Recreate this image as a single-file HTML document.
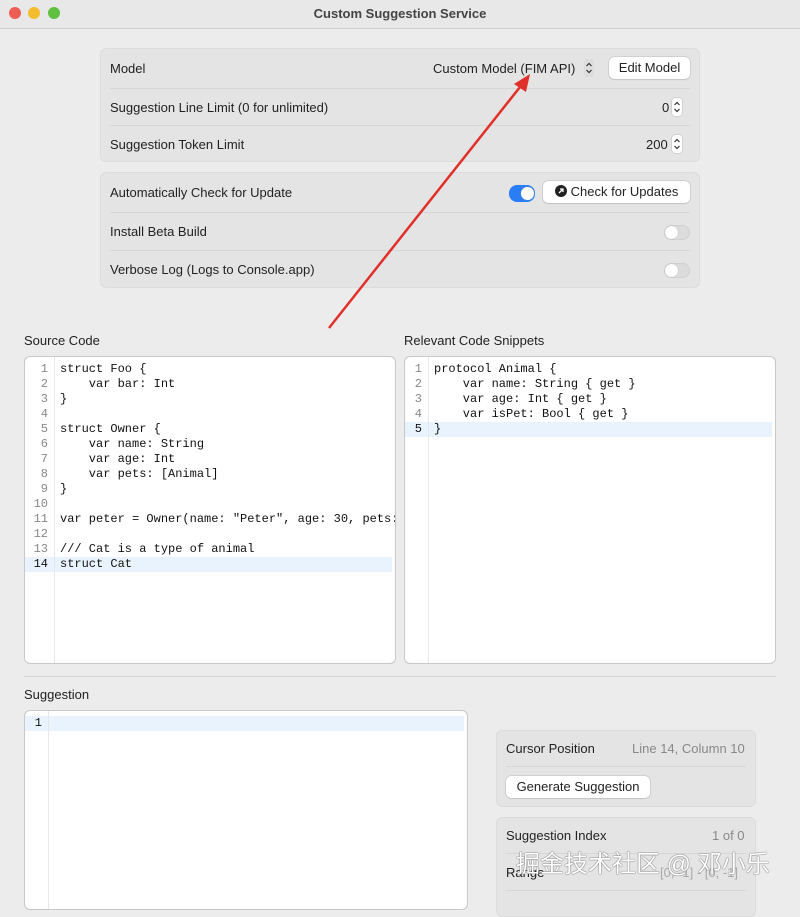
<!DOCTYPE html><html><head><style>
*{box-sizing:border-box;margin:0;padding:0}
body{width:800px;height:900px;overflow:hidden;background:#ececec;font-family:"Liberation Sans",sans-serif;font-size:13px;color:#222;position:relative}
.title{position:absolute;top:0;left:0;width:800px;height:29px;background:#e8e8e8;border-bottom:1px solid #d0d0d0;text-align:center;font-weight:bold;line-height:28px;color:#444}
.dot{position:absolute;top:7px;width:12px;height:12px;border-radius:50%}
.a{position:absolute}
.grp{position:absolute;background:#e4e4e4;border:1px solid #dcdcdc;border-radius:6px}
.sep{position:absolute;height:1px;background:#d6d6d6}
.btn{position:absolute;background:#fff;border-radius:5px;box-shadow:0 0 0 .5px #bbb,0 1px 1px #ccc;text-align:center;font-size:13px;line-height:22px}
.tog{position:absolute;width:26px;height:15px;border-radius:8px;background:#dcdcdc;border:1px solid #d0d0d0}
.tog i{position:absolute;top:0;left:0;width:13px;height:13px;border-radius:50%;background:#fff;box-shadow:0 0 1px #999}
.ed{position:absolute;background:#fff;border:1px solid #c8c8c8;border-radius:6px;overflow:hidden;font-family:"Liberation Mono",monospace;font-size:12px;line-height:15px}
.gut{position:absolute;top:0;left:0;bottom:0;width:30px;border-right:1px solid #e6e6e6;color:#888;text-align:right;padding:5px 6px 0 0}
.code{position:absolute;top:5px;left:35px;white-space:pre;color:#111}
.hl{position:absolute;left:0;right:3px;height:15px;background:#e9f3fd}
.stp{position:absolute;width:10px;height:18px;border-radius:3px;background:#fff;box-shadow:0 0 0 .5px #bbb}
.stp svg{position:absolute;left:1px;top:2px}
</style></head><body>
<div class="title">Custom Suggestion Service</div>
<div class="dot" style="left:9px;background:#ee5e56"></div><div class="dot" style="left:28px;background:#f4bd2f"></div><div class="dot" style="left:48px;background:#5fc13f"></div>

<div class="grp" style="left:100px;top:48px;width:600px;height:114px"></div>
<div class="a" style="left:110px;top:61px">Model</div>
<div class="a" style="left:433px;top:61px">Custom Model (FIM API)</div>
<div class="stp" style="left:584px;top:59px;background:#ddd;box-shadow:none"><svg width="8" height="14"><path d="M1.5 5L4 2.5 6.5 5M1.5 9L4 11.5 6.5 9" stroke="#333" fill="none" stroke-width="1.2"/></svg></div>
<div class="btn" style="left:609px;top:57px;width:81px">Edit Model</div>
<div class="sep" style="left:110px;top:88px;width:580px"></div>
<div class="a" style="left:110px;top:100px">Suggestion Line Limit (0 for unlimited)</div>
<div class="a" style="left:662px;top:100px">0</div>
<div class="stp" style="left:672px;top:98px"><svg width="8" height="14"><path d="M1.5 5L4 2.5 6.5 5M1.5 9L4 11.5 6.5 9" stroke="#333" fill="none" stroke-width="1.2"/></svg></div>
<div class="sep" style="left:110px;top:125px;width:580px"></div>
<div class="a" style="left:110px;top:137px">Suggestion Token Limit</div>
<div class="a" style="left:646px;top:137px">200</div>
<div class="stp" style="left:672px;top:135px"><svg width="8" height="14"><path d="M1.5 5L4 2.5 6.5 5M1.5 9L4 11.5 6.5 9" stroke="#333" fill="none" stroke-width="1.2"/></svg></div>

<div class="grp" style="left:100px;top:172px;width:600px;height:116px"></div>
<div class="a" style="left:110px;top:185px">Automatically Check for Update</div>
<div class="tog" style="left:509px;top:185px;height:17px;background:#2a7ef5;border-color:#2a7ef5"><i style="left:11px;top:1px"></i></div>
<div class="btn" style="left:543px;top:181px;width:147px"><svg width="12" height="12" style="vertical-align:-1px;margin-right:4px"><circle cx="6" cy="6" r="6" fill="#222"/><path d="M4 8L8 4M5 4h3v3" stroke="#fff" stroke-width="1.3" fill="none"/></svg>Check for Updates</div>
<div class="sep" style="left:110px;top:212px;width:580px"></div>
<div class="a" style="left:110px;top:224px">Install Beta Build</div>
<div class="tog" style="left:664px;top:225px"><i></i></div>
<div class="sep" style="left:110px;top:250px;width:580px"></div>
<div class="a" style="left:110px;top:262px">Verbose Log (Logs to Console.app)</div>
<div class="tog" style="left:664px;top:263px"><i></i></div>

<svg class="a" style="left:0;top:0" width="800" height="900"><line x1="329" y1="328" x2="524" y2="82" stroke="#e0302a" stroke-width="2.5"/><polygon points="530,74 514,84 526,92" fill="#e0302a"/></svg>

<div class="a" style="left:24px;top:333px">Source Code</div>
<div class="a" style="left:404px;top:333px">Relevant Code Snippets</div>
<div class="ed" style="left:24px;top:356px;width:372px;height:308px">
<div class="hl" style="top:200px"></div>
<div class="gut">1<br>2<br>3<br>4<br>5<br>6<br>7<br>8<br>9<br>10<br>11<br>12<br>13<br><b style="color:#111;font-weight:normal">14</b></div>
<div class="code">struct Foo {
    var bar: Int
}

struct Owner {
    var name: String
    var age: Int
    var pets: [Animal]
}

var peter = Owner(name: "Peter", age: 30, pets: [])

/// Cat is a type of animal
struct Cat</div></div>
<div class="ed" style="left:404px;top:356px;width:372px;height:308px">
<div class="hl" style="top:65px"></div>
<div class="gut" style="width:24px">1<br>2<br>3<br>4<br><span style="color:#111">5</span></div>
<div class="code" style="left:29px">protocol Animal {
    var name: String { get }
    var age: Int { get }
    var isPet: Bool { get }
}</div></div>
<div class="sep" style="left:24px;top:676px;width:752px"></div>
<div class="a" style="left:24px;top:687px">Suggestion</div>
<div class="ed" style="left:24px;top:710px;width:444px;height:200px">
<div class="hl" style="top:5px"></div>
<div class="gut" style="width:24px;color:#111">1</div></div>

<div class="grp" style="left:496px;top:730px;width:260px;height:77px"></div>
<div class="a" style="left:506px;top:741px">Cursor Position</div>
<div class="a" style="left:632px;top:741px;color:#888">Line 14, Column 10</div>
<div class="sep" style="left:506px;top:766px;width:240px"></div>
<div class="btn" style="left:506px;top:776px;width:144px">Generate Suggestion</div>
<div class="grp" style="left:496px;top:817px;width:260px;height:100px"></div>
<div class="a" style="left:506px;top:828px">Suggestion Index</div>
<div class="a" style="left:712px;top:828px;color:#888">1 of 0</div>
<div class="sep" style="left:506px;top:853px;width:240px"></div>
<div class="a" style="left:506px;top:865px">Range</div>
<div class="a" style="left:660px;top:865px;color:#aaa">[0, -1] - [0, -1]</div>
<div class="sep" style="left:506px;top:890px;width:240px"></div>
<div class="a" style="left:516px;top:844px;font-family:'Liberation Sans','Noto Sans CJK SC',sans-serif;font-size:24px;color:#fff;text-shadow:0 0 1px #555,0 0 1px #555">掘金技术社区 @ 邓小乐</div>
</body></html>
